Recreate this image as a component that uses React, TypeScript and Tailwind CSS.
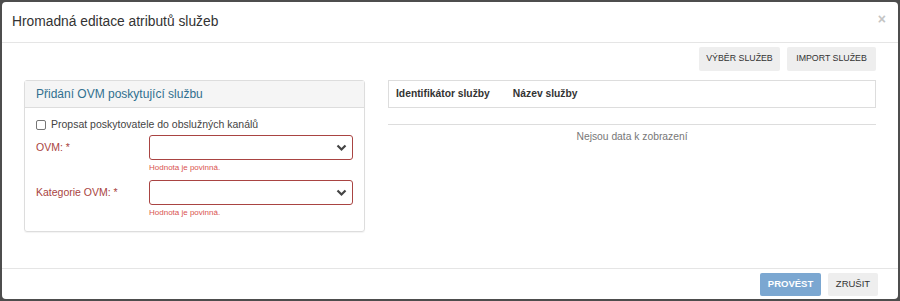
const Chevron = () => (
  <svg width="11" height="8" viewBox="0 0 11 8" className="shrink-0">
    <path d="M1.5 1.5 L5.5 5.5 L9.5 1.5" fill="none" stroke="#444" strokeWidth="2.2" />
  </svg>
);

const SelectField = ({ label }: { label: string }) => (
  <div className="flex items-start">
    <label className="flex h-[25px] w-[113px] shrink-0 items-center text-[10.5px] text-[#a94442]">{label}</label>
    <div className="flex-1">
      <div className="flex h-[25px] items-center justify-end rounded-[3px] border border-[#a94442] bg-white pr-[5px]">
        <Chevron />
      </div>
      <div className="mt-[2px] text-[8px] leading-[12px] text-[#d9534f]">Hodnota je povinná.</div>
    </div>
  </div>
);

const App = () => {
  return (
    <div className="h-[301px] w-[900px] bg-[#4d4d4d] p-[2px] font-['Liberation_Sans',Arial,sans-serif] text-[#333]">
      <div className="flex h-[297px] flex-col rounded-[4px] bg-white">
        {/* header */}
        <div className="flex h-[41px] shrink-0 items-center justify-between border-b border-[#e5e5e5] pl-[10px] pr-[12px]">
          <h4 className="text-[13.8px] text-[#333]">Hromadná editace atributů služeb</h4>
          <span className="-mt-[6px] text-[14px] font-bold text-[#c4c4c4]">×</span>
        </div>

        {/* body */}
        <div className="flex-1 px-[22px] pt-[4px]">
          <div className="flex justify-end gap-[7px]">
            <button className="h-[24px] w-[81px] rounded-[2px] bg-[#eeeeee] text-[8.8px] uppercase text-[#333]">Výběr služeb</button>
            <button className="h-[24px] w-[89px] rounded-[2px] bg-[#eeeeee] text-[8.8px] uppercase text-[#333]">Import služeb</button>
          </div>

          <div className="mt-[9px] flex gap-[23px]">
            <div className="w-[341px] shrink-0 rounded-[3px] border border-[#dddddd] shadow-[0_1px_1px_rgba(0,0,0,0.05)]">
              <div className="flex h-[27px] items-center border-b border-[#dddddd] bg-[#f5f5f5] px-[11px] text-[12px] text-[#31708f]">
                Přidání OVM poskytující službu
              </div>
              <div className="px-[11px] pb-[12px] pt-[10px]">
                <label className="flex items-center gap-[5px] text-[10.5px] leading-[13px] text-[#444]">
                  <span className="h-[10px] w-[10px] rounded-[2px] border border-[#767676] bg-white" />
                  Propsat poskytovatele do obslužných kanálů
                </label>
                <div className="mt-[4px] flex flex-col gap-[6px]">
                  <SelectField label="OVM: *" />
                  <SelectField label="Kategorie OVM: *" />
                </div>
              </div>
            </div>

            <div className="flex-1">
              <div className="flex h-[28px] items-center gap-[23px] border border-[#dddddd] px-[7px] text-[10.3px] font-bold text-[#333]">
                <span>Identifikátor služby</span>
                <span>Název služby</span>
              </div>
              <div className="mt-[16px] border-t border-[#dddddd] pt-[4px] text-center text-[10.3px] text-[#777]">
                Nejsou data k zobrazení
              </div>
            </div>
          </div>
        </div>

        {/* footer */}
        <div className="flex h-[31px] shrink-0 items-start justify-end gap-[7px] border-t border-[#e5e5e5] pr-[20px] pt-[4px]">
          <button className="h-[23px] w-[61px] rounded-[2px] bg-[#7ba7d1] text-[9.5px] font-bold text-white">PROVÉST</button>
          <button className="h-[23px] w-[50px] rounded-[2px] bg-[#eeeeee] text-[9.5px] text-[#333]">ZRUŠIT</button>
        </div>
      </div>
    </div>
  );
};

export default App;
